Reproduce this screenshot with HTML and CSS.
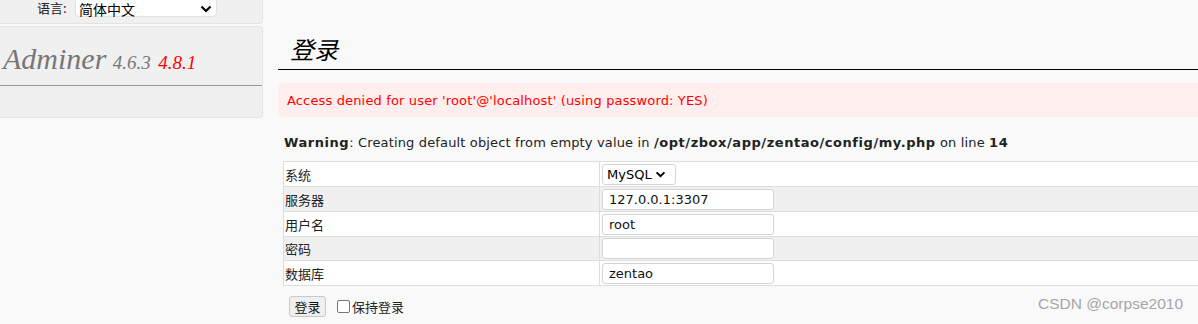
FILE: index.html
```html
<!DOCTYPE html>
<html lang="zh-CN">
<head>
<meta charset="utf-8">
<title>登录 - Adminer</title>
<link rel="stylesheet" href="styles.css">
</head>
<body>
<div class="page">
  <aside class="sidebar">
    <div class="lang-box">
      <label class="lang-label">语言:</label>
      <div class="lang-select">
        <span>简体中文</span>
        <svg class="chev" viewBox="0 0 12 8" width="12" height="8"><path d="M1.5 1.5 L6 6 L10.5 1.5" fill="none" stroke="#000" stroke-width="2.2"/></svg>
      </div>
    </div>
    <div class="menu-box">
      <h1 class="brand"><span class="brand-name">Adminer</span> <span class="ver">4.6.3</span> <span class="ver new">4.8.1</span></h1>
    </div>
  </aside>
  <main class="content">
    <h2 class="title">登录</h2>
    <div class="error">Access denied for user 'root'@'localhost' (using password: YES)</div>
    <p class="warning"><b>Warning</b>: Creating default object from empty value in <b>/opt/zbox/app/zentao/config/my.php</b> on line <b>14</b></p>
    <table class="login">
      <tr><th>系统</th><td><div class="sel">MySQL<svg class="chev2" viewBox="0 0 12 8" width="11" height="7"><path d="M1.5 1.5 L6 6 L10.5 1.5" fill="none" stroke="#000" stroke-width="2.2"/></svg></div></td></tr>
      <tr class="odd"><th>服务器</th><td><div class="inp">127.0.0.1:3307</div></td></tr>
      <tr><th>用户名</th><td><div class="inp">root</div></td></tr>
      <tr class="odd"><th>密码</th><td><div class="inp"></div></td></tr>
      <tr><th>数据库</th><td><div class="inp">zentao</div></td></tr>
    </table>
    <div class="actions">
      <button class="btn">登录</button>
      <label class="keep"><span class="cb"></span>保持登录</label>
    </div>
  </main>
</div>
<div class="watermark">CSDN @corpse2010</div>
</body>
</html>
```
FILE: styles.css
```css
html, body { margin: 0; padding: 0; }
body {
  background: #f9f9f9;
  width: 1198px;
  height: 324px;
  overflow: hidden;
  font-family: "DejaVu Sans", Verdana, "Noto Sans CJK SC", sans-serif;
  font-size: 13px;
  color: #000;
}
.page { display: flex; align-items: flex-start; }
.sidebar { width: 263px; flex: none; display: flex; flex-direction: column; gap: 2px; }
.lang-box {
  height: 24px;
  box-sizing: border-box;
  background: #f0f0f0;
  border: 1px solid #e3e3e3;
  border-top: none;
  border-left: none;
  border-radius: 0 0 4px 0;
  display: flex;
  align-items: flex-start;
  padding-left: 37px;
}
.lang-label {
  font-family: "Noto Sans CJK SC", sans-serif;
  font-size: 13px;
  line-height: 16px;
  width: 38px;
  color: #222;
}
.lang-select {
  width: 142px;
  height: 19px;
  margin-top: -2px;
  box-sizing: border-box;
  background: #fff;
  border: 1px solid #e2e2e2;
  border-radius: 0 0 4px 4px;
  display: flex;
  align-items: center;
  justify-content: space-between;
  padding: 2px 4px 0 3px;
  font-family: "Noto Sans CJK SC", sans-serif;
  font-size: 14px;
  line-height: 16px;
}
.menu-box {
  height: 92px;
  box-sizing: border-box;
  background: #f0f0f0;
  border: 1px solid #e3e3e3;
  border-left: none;
  border-radius: 0 4px 4px 0;
}
.brand {
  margin: 0;
  height: 59px;
  box-sizing: border-box;
  border-bottom: 1px solid #999;
  padding: 17px 0 0 3px;
  font-family: "Liberation Serif", "Times New Roman", serif;
  font-style: italic;
  font-weight: normal;
  line-height: 30px;
  color: #777;
  white-space: nowrap;
}
.brand-name { font-size: 30px; }
.ver { font-size: 19px; }
.ver.new { color: #f00; margin-left: 1px; }
.content { flex: 1; margin-left: 15px; min-width: 0; }
.title {
  margin: 28px 0 0;
  height: 42px;
  box-sizing: border-box;
  border-bottom: 1px solid #000;
  padding: 6px 0 0 12px;
  font-family: "Noto Sans CJK SC", sans-serif;
  font-style: italic;
  font-weight: normal;
  font-size: 24px;
  line-height: 30px;
}
.error {
  margin-top: 13px;
  height: 34px;
  box-sizing: border-box;
  background: #fee;
  color: #f00;
  border-radius: 5px 0 0 5px;
  padding: 9px 0 0 9px;
  line-height: 17px;
  letter-spacing: 0.15px;
  white-space: nowrap;
}
.warning {
  margin: 16px 0 0 6px;
  height: 28px;
  padding-top: 1px;
  box-sizing: border-box;
  line-height: 17px;
  letter-spacing: 0.15px;
  white-space: nowrap;
  color: #222;
}
.warning b { color: #222; letter-spacing: 0.55px; }
.login {
  margin-left: 5px;
  width: 930px;
  border-collapse: collapse;
  border: 1px solid #bbb;
  background: #fff;
}
.login th, .login td {
  border: 1px solid #ddd;
  padding: 0;
  height: 24px;
  vertical-align: middle;
}
.login tr:nth-child(4) th, .login tr:nth-child(4) td { height: 23px; }
.login th {
  width: 314px;
  text-align: left;
  font-weight: normal;
  font-family: "Noto Sans CJK SC", sans-serif;
  font-size: 13px;
  padding-left: 1px;
  color: #222;
}
.login tr.odd { background: #f0f0f0; }
.login td { padding-left: 2px; }
.inp {
  width: 172px;
  height: 21px;
  box-sizing: border-box;
  background: #fff;
  border: 1px solid #d4d4d4;
  border-radius: 3px;
  padding: 1px 0 0 6px;
  line-height: 18px;
  color: #111;
}
.sel {
  width: 74px;
  height: 21px;
  box-sizing: border-box;
  background: #fff;
  border: 1px solid #d4d4d4;
  border-radius: 3px;
  padding: 1px 0 0 4px;
  line-height: 18px;
  display: flex;
  align-items: center;
  gap: 3px;
}
.actions {
  display: flex;
  align-items: center;
  margin: 10px 0 0 11px;
  gap: 11px;
}
.btn {
  width: 37px;
  height: 21px;
  padding: 0;
  background: #efefef;
  border: 1px solid #c8c8c8;
  border-radius: 3px;
  font-family: "Noto Sans CJK SC", sans-serif;
  font-size: 13px;
  line-height: 18px;
  color: #111;
}
.keep {
  display: flex;
  align-items: center;
  font-family: "Noto Sans CJK SC", sans-serif;
  font-size: 13px;
  color: #222;
}
.cb {
  width: 11px;
  height: 11px;
  border: 1px solid #777;
  border-radius: 2px;
  background: #fff;
  margin-right: 2px;
}
.watermark {
  position: absolute;
  right: 15px;
  top: 295px;
  font-family: "Liberation Sans", Arial, sans-serif;
  font-size: 15.5px;
  color: #a6a6a6;
}
```
